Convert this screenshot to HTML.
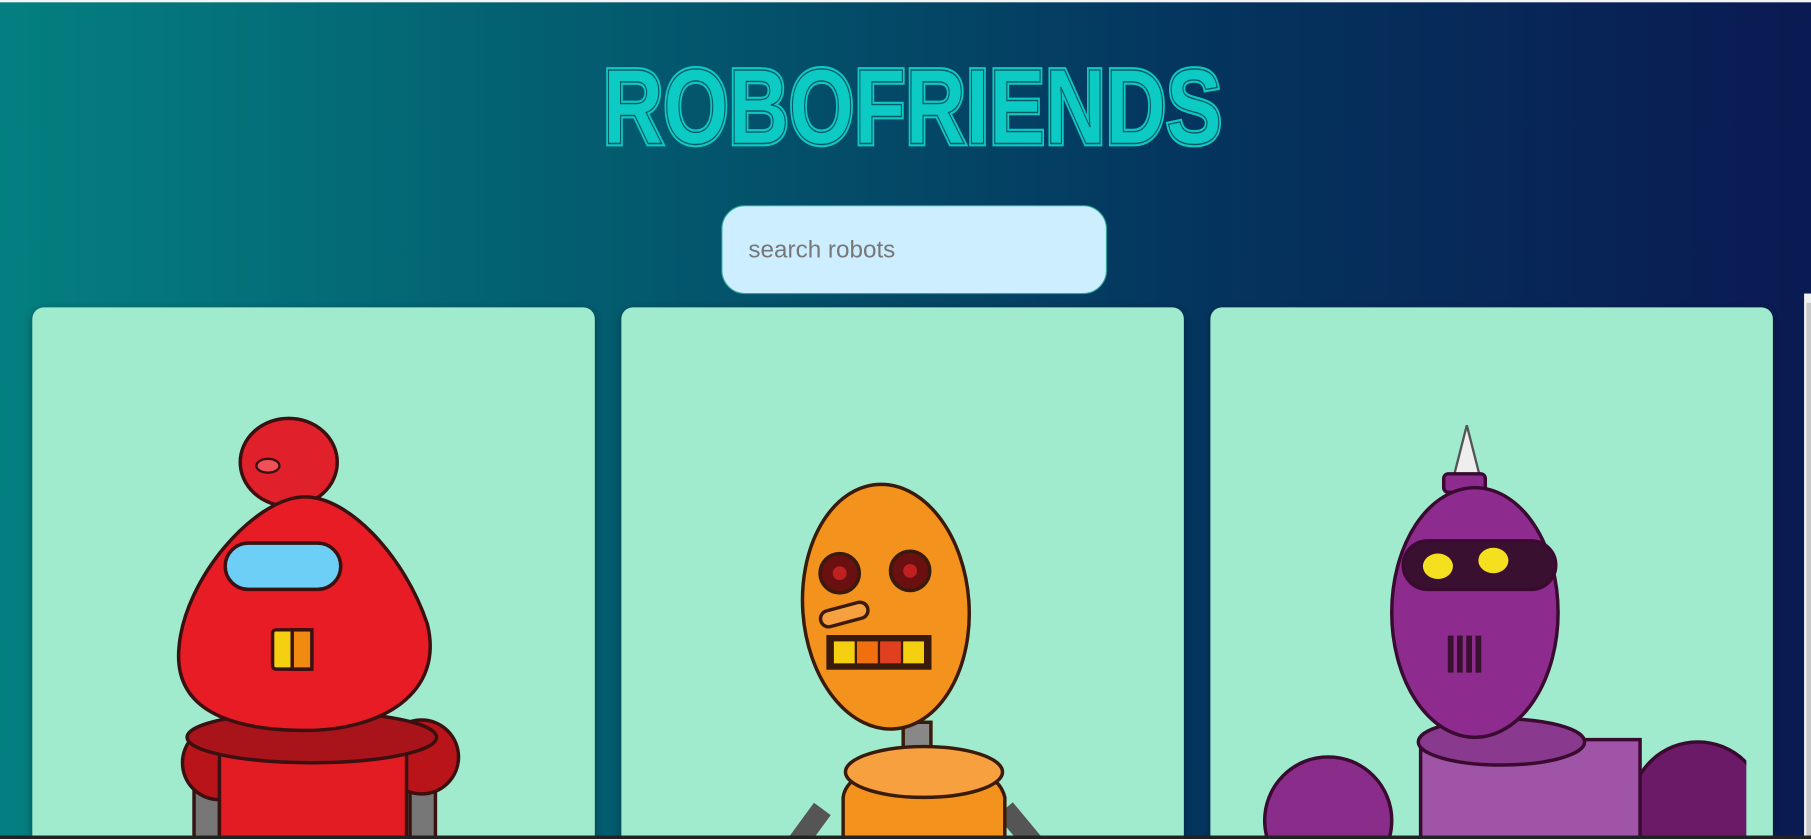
<!DOCTYPE html>
<html><head><meta charset="utf-8"><style>
html,body{margin:0;padding:0;width:1811px;height:839px;overflow:hidden}
body{background:#04365f}
svg{position:absolute;left:0;top:0;display:block}
</style></head><body>
<svg width="1811" height="839" viewBox="0 0 1568 726" preserveAspectRatio="none" xmlns="http://www.w3.org/2000/svg">
<defs>
<linearGradient id="bg" x1="0" x2="1" y1="0" y2="0"><stop offset="0" stop-color="#047f80"/><stop offset="0.35" stop-color="#035a6e"/><stop offset="0.65" stop-color="#04365f"/><stop offset="1" stop-color="#0a1a52"/></linearGradient>
<filter id="sh" x="-10%" y="-10%" width="120%" height="120%"><feDropShadow dx="0" dy="2" stdDeviation="4" flood-color="#000" flood-opacity="0.35"/></filter>
<clipPath id="c1"><rect x="28" y="266" width="487" height="460"/></clipPath>
<clipPath id="c2"><rect x="538" y="266" width="487" height="460"/></clipPath>
<clipPath id="c3"><rect x="1048" y="266" width="464" height="460"/></clipPath>
<clipPath id="all"><rect width="1568" height="726"/></clipPath>
</defs>
<g clip-path="url(#all)">
<rect width="1568" height="726" fill="url(#bg)"/>
<rect width="1568" height="2" fill="#f4f4f4"/>
<!-- title -->
<text x="790" y="124" text-anchor="middle" font-family="Liberation Sans, sans-serif" font-weight="bold" font-size="92" fill="#0ccac4" stroke="#0ccac4" stroke-width="5" stroke-linejoin="miter" textLength="536" lengthAdjust="spacingAndGlyphs">ROBOFRIENDS</text>
<text x="790" y="124" text-anchor="middle" font-family="Liberation Sans, sans-serif" font-weight="bold" font-size="92" fill="none" stroke="#0a5a66" stroke-width="1.2" textLength="536" lengthAdjust="spacingAndGlyphs">ROBOFRIENDS</text>
<!-- search -->
<rect x="625" y="178" width="333" height="76" rx="20" fill="#cdeeff" stroke="#2aa59a" stroke-width="1"/>
<text x="648" y="223" font-family="Liberation Sans, sans-serif" font-size="21" fill="#777">search robots</text>
<!-- cards -->
<rect x="28" y="266" width="487" height="470" rx="10" fill="#a0eace" filter="url(#sh)"/>
<rect x="538" y="266" width="487" height="470" rx="10" fill="#a0eace" filter="url(#sh)"/>
<rect x="1048" y="266" width="487" height="470" rx="10" fill="#a0eace" filter="url(#sh)"/>
<!-- red robot -->
<g clip-path="url(#c1)" stroke="#3a1010" stroke-width="3">
<rect x="168" y="680" width="22" height="50" fill="#777"/>
<rect x="355" y="680" width="22" height="50" fill="#777"/>
<circle cx="190" cy="660" r="32" fill="#b8141a"/>
<circle cx="365" cy="655" r="32" fill="#b8141a"/>
<rect x="190" y="625" width="162" height="110" fill="#e31b23"/>
<ellipse cx="270" cy="638" rx="108" ry="22" fill="#a8141a"/>
<rect x="245" y="425" width="30" height="20" fill="#c81820"/>
<ellipse cx="250" cy="400" rx="42" ry="38" fill="#e0202a"/>
<ellipse cx="232" cy="403" rx="10" ry="6" fill="#f05058" stroke-width="2"/>
<path d="M262,430 C300,428 350,480 370,540 C385,600 330,632 265,632 C195,632 150,612 155,560 C160,500 220,432 262,430 Z" fill="#e81c24"/>
<rect x="195" y="470" width="100" height="40" rx="20" fill="#6ecff6"/>
<rect x="236" y="545" width="34" height="34" rx="3" fill="#f5d010"/>
<rect x="253" y="545" width="17" height="34" fill="#f08a10"/>
</g>
<!-- orange robot -->
<g clip-path="url(#c2)" stroke="#3a1a0a" stroke-width="3">
<path d="M712,700 L690,730" stroke="#555" stroke-width="18"/>
<path d="M870,700 L895,730" stroke="#555" stroke-width="18"/>
<rect x="782" y="625" width="24" height="45" fill="#888"/>
<path d="M730,690 C735,650 860,645 870,690 L870,730 L730,730 Z" fill="#f4921e"/>
<ellipse cx="800" cy="668" rx="68" ry="22" fill="#f7a040"/>
<ellipse cx="767" cy="525" rx="72" ry="106" fill="#f4921e" transform="rotate(-4 767 525)"/>
<circle cx="727" cy="496" r="17" fill="#6a1010"/><circle cx="727" cy="496" r="6" fill="#c02020" stroke="none"/>
<circle cx="788" cy="494" r="17" fill="#6a1010"/><circle cx="788" cy="494" r="6" fill="#c02020" stroke="none"/>
<rect x="710" y="525" width="42" height="14" rx="7" fill="#f7a040" transform="rotate(-15 730 532)"/>
<rect x="717" y="551" width="88" height="27" fill="#3a1a0a"/>
<rect x="722" y="555" width="18" height="19" fill="#f5d010" stroke="none"/>
<rect x="742" y="555" width="18" height="19" fill="#f07010" stroke="none"/>
<rect x="762" y="555" width="18" height="19" fill="#e04020" stroke="none"/>
<rect x="782" y="555" width="18" height="19" fill="#f5d010" stroke="none"/>
</g>
<!-- purple robot -->
<g clip-path="url(#c3)" stroke="#3a0a30" stroke-width="3">
<circle cx="1150" cy="710" r="55" fill="#8a2c8a"/>
<circle cx="1470" cy="700" r="58" fill="#6a1a66"/>
<rect x="1230" y="640" width="190" height="100" fill="#a054a8"/>
<ellipse cx="1300" cy="642" rx="72" ry="20" fill="#8a3a8e"/>
<polygon points="1258,415 1270,368 1282,415" fill="#eee" stroke="#555" stroke-width="2"/>
<rect x="1250" y="410" width="36" height="16" rx="4" fill="#8e2b8e"/>
<ellipse cx="1277" cy="530" rx="72" ry="108" fill="#8e2b8e"/>
<rect x="1215" y="468" width="132" height="42" rx="21" fill="#3a1030"/>
<ellipse cx="1245" cy="490" rx="13" ry="11" fill="#f5e020" stroke="none"/>
<ellipse cx="1293" cy="485" rx="13" ry="11" fill="#f5e020" stroke="none"/>
<path d="M1256,550 V582 M1264,550 V582 M1272,550 V582 M1280,550 V582" stroke="#3a1030" stroke-width="5"/>
</g>
<!-- right scrollbar area -->
<rect x="1562" y="254" width="6" height="472" fill="#f0f0f0"/>
<rect x="1564" y="262" width="4" height="464" fill="#c8c8c8"/>
<rect x="0" y="723" width="1568" height="3" fill="#222"/>
</g>
</svg>
</body></html>
